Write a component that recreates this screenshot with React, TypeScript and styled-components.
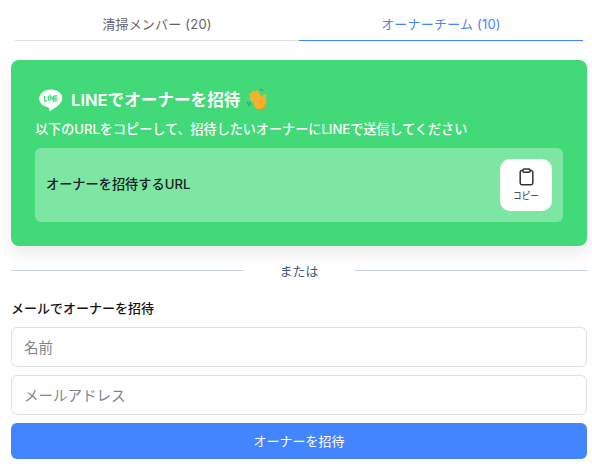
import React from 'react';
import styled, { createGlobalStyle } from 'styled-components';

const GlobalStyle = createGlobalStyle`
  html, body {
    margin: 0;
    padding: 0;
    background: #fff;
    font-family: Inter, "Noto Sans CJK JP", sans-serif;
  }
  * {
    box-sizing: border-box;
  }
`;

const Page = styled.div`
  width: 592px;
  height: 467px;
  padding: 8px 5px 0 11px;
  overflow: hidden;
`;

const Tabs = styled.div`
  display: flex;
  margin: 0 4px;
`;

const Tab = styled.div<{ $active?: boolean }>`
  flex: 1;
  height: 33px;
  display: flex;
  align-items: center;
  justify-content: center;
  padding-bottom: 1px;
  font-size: 13px;
  letter-spacing: 0.2px;
  font-weight: 400;
  color: ${p => (p.$active ? '#4785fa' : '#5f6368')};
  border-bottom: 1px solid ${p => (p.$active ? '#4285ff' : '#e0e0e0')};
`;

const LineCard = styled.section`
  margin-top: 19px;
  height: 186px;
  padding: 24px;
  background: #42da78;
  border-radius: 8px;
  box-shadow: 0 8px 16px rgba(0, 0, 0, 0.08);
  color: #fff;
`;

const CardTitle = styled.h2`
  display: flex;
  align-items: center;
  gap: 7px;
  height: 32px;
  margin: 0 0 0 3px;
  font-size: 16.6px;
  line-height: 32px;
  font-weight: 600;

  svg:last-child {
    margin-left: -1px;
  }
`;

const CardNote = styled.p`
  margin: 3px 0 0;
  font-size: 13.1px;
  line-height: 20px;
  font-weight: 500;
`;

const UrlPanel = styled.div`
  display: flex;
  align-items: center;
  justify-content: space-between;
  height: 74px;
  margin-top: 9px;
  padding: 0 11px 0 11px;
  background: rgba(255, 255, 255, 0.32);
  border-radius: 6px;
`;

const UrlLabel = styled.span`
  margin-top: -3px;
  font-size: 13.2px;
  font-weight: 500;
  color: #1a2027;
`;

const CopyButton = styled.button`
  width: 52px;
  height: 52px;
  padding: 0 0 2px;
  border: 0;
  border-radius: 10px;
  background: #fff;
  color: #2b2b2b;
  font-family: inherit;
  font-size: 8.6px;
  display: flex;
  flex-direction: column;
  align-items: center;
  justify-content: center;
  gap: 3px;
`;

const Divider = styled.div`
  display: flex;
  align-items: center;
  margin-top: 14px;
  height: 20px;
  font-size: 13px;
  font-weight: 400;
  color: #4a5a72;

  &::before,
  &::after {
    content: '';
    flex: 1;
    height: 1px;
    margin-top: 1px;
    background: #c8d2de;
  }

  span {
    width: 112px;
    text-align: center;
  }
`;

const SectionLabel = styled.h3`
  margin: 18px 0 0;
  font-size: 13px;
  line-height: 20px;
  font-weight: 500;
  color: #141414;
`;

const Form = styled.form`
  display: flex;
  flex-direction: column;
  gap: 8px;
  margin-top: 9px;
`;

const TextInput = styled.input`
  width: 100%;
  height: 40px;
  padding: 0 12px;
  border: 1px solid #e0e0e0;
  border-radius: 6px;
  background: #fff;
  font-family: inherit;
  font-size: 14.5px;
  font-weight: 400;

  &::placeholder {
    color: #82868b;
    opacity: 1;
  }
`;

const SubmitButton = styled.button`
  height: 36px;
  padding: 0 0 2px;
  border: 0;
  border-radius: 6px;
  background: #4285ff;
  color: #fff;
  font-family: inherit;
  font-size: 13px;
  font-weight: 400;
`;

const LineLogo = () => (
  <svg width="26" height="24" viewBox="0 0 26 24" aria-hidden="true">
    <path
      fill="#fff"
      d="M13 1.500C6.400 1.500 1.200 5.500 1.200 10.600c0 4.400 3.900 8 9.200 8.800.6.1.9.4.9 1l-.1 2c0 .6.4.8.9.5 1.700-1 6.200-3.600 8.800-6.200 2.300-2 3.300-3.900 3.300-6.100C24.800 5.500 19.600 1.500 13 1.500z"
    />
    <g stroke="#42da78" strokeWidth="1.150" fill="none">
      <path d="M6.500 7.800v5h2.400" />
      <path d="M10.400 7.800v5" />
      <path d="M12.300 12.800v-5l3.100 5v-5" />
      <path d="M19.500 7.800h-2.600v5h2.600M16.900 10.300h2.400" />
    </g>
  </svg>
);

const WaveEmoji = () => (
  <svg width="24" height="24" viewBox="0 0 24 24" aria-hidden="true">
    <g stroke="#3f9a78" strokeWidth="1.100" fill="none" strokeLinecap="round">
      <path d="M1.200 14.500c.5 1.400 1.300 2.500 2.400 3.300" />
      <path d="M3.300 14.200c.4.800.8 1.400 1.400 2" />
      <path d="M14 1.300c1.200.2 2.200.7 3 1.500" />
    </g>
    <g stroke="#f7b02c" strokeWidth="3.100" strokeLinecap="round" fill="none">
      <path d="M10.500 15.500L5 10.500" />
      <path d="M11 13L4.800 6.600" />
      <path d="M13 11L7.200 4.200" />
      <path d="M15 10.500L10.800 4" />
      <path d="M18.200 13L18.600 7.600" />
    </g>
    <ellipse cx="14.200" cy="15" rx="6.300" ry="7" fill="#f7b02c" />
    <path fill="#e8901c" d="M9 20c3.300 2 7.900.9 9.700-2.600.8-1.500 1-3 .9-4.600.8 2.700.6 4.900-.6 6.900-2.100 3.300-6.900 3.300-10 .3z" />
    <path stroke="#e09020" strokeWidth=".6" fill="none" d="M16.900 12.500c-1.700.7-2.700 2.500-2.200 4.400" />
  </svg>
);

const ClipboardIcon = () => (
  <svg width="15" height="18" viewBox="0 0 15 18" fill="none" stroke="#333" strokeWidth="1.500" aria-hidden="true">
    <path d="M4 2.600H2.900c-1 0-1.700.7-1.700 1.700v10.800c0 1 .7 1.700 1.700 1.700h9.200c1 0 1.700-.7 1.700-1.700V4.300c0-1-.7-1.700-1.700-1.700H11" />
    <rect x="4" y="1" width="7" height="3.200" rx="1" />
  </svg>
);

export default function App() {
  return (
    <Page>
      <GlobalStyle />
      <Tabs>
        <Tab>清掃メンバー (20)</Tab>
        <Tab $active>オーナーチーム (10)</Tab>
      </Tabs>
      <LineCard>
        <CardTitle>
          <LineLogo />
          <span>LINEでオーナーを招待</span>
          <WaveEmoji />
        </CardTitle>
        <CardNote>以下のURLをコピーして、招待したいオーナーにLINEで送信してください</CardNote>
        <UrlPanel>
          <UrlLabel>オーナーを招待するURL</UrlLabel>
          <CopyButton type="button">
            <ClipboardIcon />
            コピー
          </CopyButton>
        </UrlPanel>
      </LineCard>
      <Divider>
        <span>または</span>
      </Divider>
      <SectionLabel>メールでオーナーを招待</SectionLabel>
      <Form>
        <TextInput placeholder="名前" />
        <TextInput placeholder="メールアドレス" />
        <SubmitButton type="button">オーナーを招待</SubmitButton>
      </Form>
    </Page>
  );
}
